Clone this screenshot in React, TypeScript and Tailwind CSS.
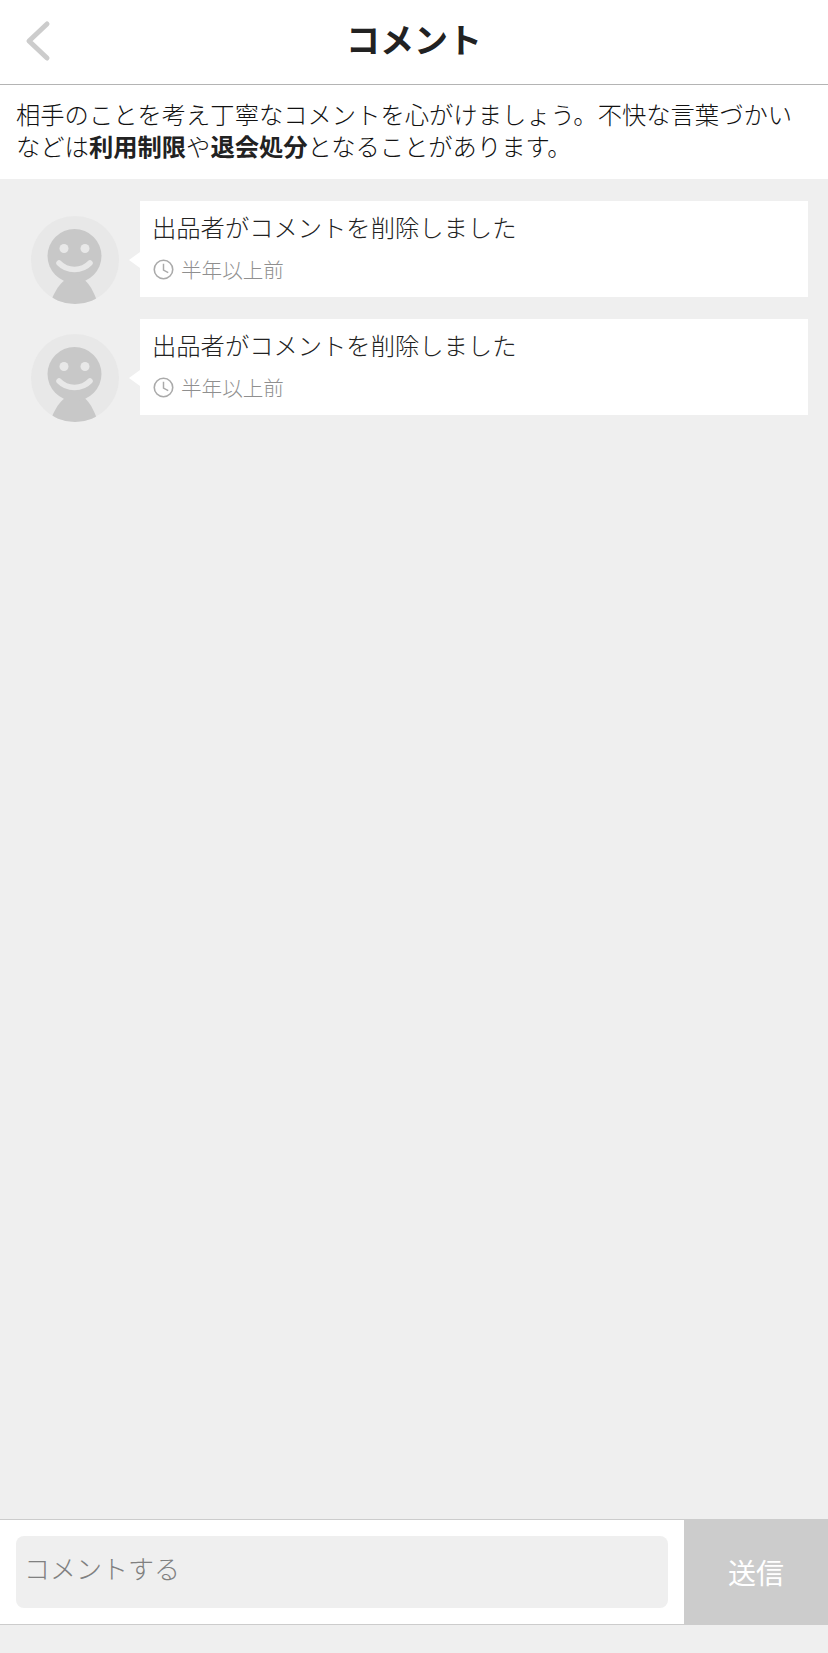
const font = { fontFamily: '"Noto Sans CJK JP", "Noto Sans", sans-serif' };

function Avatar() {
  return (
    <svg width="88" height="88" viewBox="0 0 88 88" className="shrink-0 block">
      <defs>
        <clipPath id="avatar-clip">
          <circle cx="44" cy="44" r="44" />
        </clipPath>
      </defs>
      <circle cx="44" cy="44" r="44" fill="#e8e8e8" />
      <g clipPath="url(#avatar-clip)">
        <path d="M19 88 C24 72 34 60 44 60 C54 60 62 72 67 88 Z" fill="#c8c8c8" />
      </g>
      <circle cx="43.5" cy="40" r="27" fill="#c8c8c8" />
      <circle cx="33" cy="32.5" r="4.5" fill="#e8e8e8" />
      <circle cx="54" cy="32.5" r="4.5" fill="#e8e8e8" />
      <path d="M28 47 C36 55.5 51 55.5 59 47" fill="none" stroke="#e8e8e8" strokeWidth="5.5" strokeLinecap="round" />
    </svg>
  );
}

function Clock() {
  return (
    <svg width="21" height="21" viewBox="0 0 20 20" className="shrink-0">
      <circle cx="10" cy="10" r="8.8" fill="none" stroke="#aaaaaa" strokeWidth="1.5" />
      <path d="M10 4.5 V10.5 L14.5 13" fill="none" stroke="#aaaaaa" strokeWidth="1.4" />
    </svg>
  );
}

function Comment() {
  return (
    <div className="flex h-24 items-start pl-[31px] pr-5">
      <div className="mt-[15px]">
        <Avatar />
      </div>
      <div className="relative ml-[21px] h-24 flex-1 bg-white pl-3">
        <span className="absolute -left-[11px] top-[51px] h-0 w-0 border-y-[8px] border-r-[11px] border-y-transparent border-r-white" />
        <p className="pt-[11px] text-[24.3px] font-light leading-[30px] text-[#222222]">出品者がコメントを削除しました</p>
        <div className="mt-[13px] flex items-center gap-[7px] pl-px">
          <Clock />
          <span className="text-[20.6px] font-light leading-7 text-[#8f8f8f]">半年以上前</span>
        </div>
      </div>
    </div>
  );
}

export default function App() {
  return (
    <div className="flex h-[1653px] w-[828px] flex-col bg-[#efefef]" style={font}>
      <header className="relative flex h-[85px] shrink-0 items-center justify-center border-b border-[#b4b4b4] bg-white pb-[7px]">
        <svg width="28" height="42" viewBox="0 0 28 42" className="absolute left-[24px] top-[20px]">
          <path d="M23 4 L5 21 L23 38" fill="none" stroke="#cccccc" strokeWidth="5" strokeLinecap="round" strokeLinejoin="round" />
        </svg>
        <h1 className="text-[34px] font-bold leading-none text-[#222222]">コメント</h1>
      </header>
      <div className="h-[94px] shrink-0 bg-white px-4 pt-[13px] text-[24.3px] font-light leading-[32px] text-[#111111]">
        <p className="whitespace-nowrap">
          相手のことを考え丁寧なコメントを心がけましょう。不快な言葉づかい
          <br />
          などは
          <b className="font-bold text-[#222222]">利用制限</b>や<b className="font-bold text-[#222222]">退会処分</b>
          となることがあります。
        </p>
      </div>
      <main className="flex flex-1 flex-col gap-[22px] pt-[22px]">
        <Comment />
        <Comment />
      </main>
      <footer className="flex h-[106px] shrink-0 border-y border-[#cccccc] bg-white">
        <div className="flex flex-1 items-start px-4 pt-4">
          <div className="h-[72px] w-full rounded-lg bg-[#efefef] pl-2 pt-[15px] text-[26px] font-light leading-[33px] text-[#808080]">
            コメントする
          </div>
        </div>
        <button className="-my-px w-[144px] bg-[#cccccc] text-[28px] text-white">送信</button>
      </footer>
      <div className="h-[28px] shrink-0" />
    </div>
  );
}
